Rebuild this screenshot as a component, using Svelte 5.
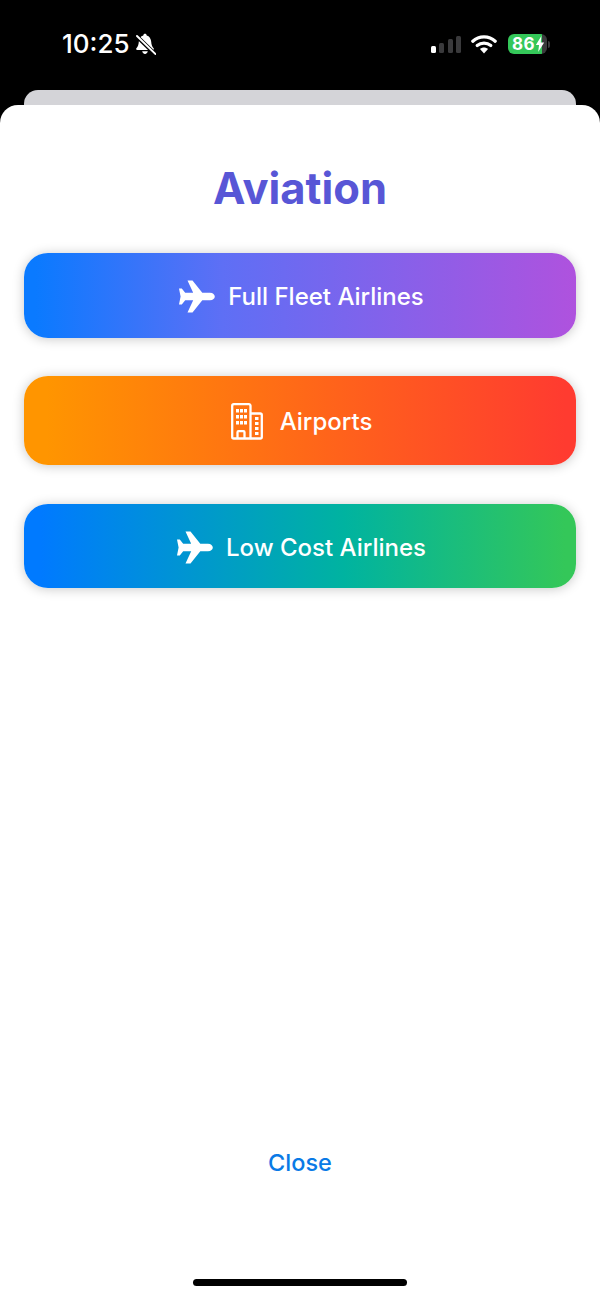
<script lang="ts">
  const buttons = [
    { label: 'Full Fleet Airlines', icon: 'plane', tone: 'fleet' },
    { label: 'Airports', icon: 'building', tone: 'airports' },
    { label: 'Low Cost Airlines', icon: 'plane', tone: 'lowcost' }
  ];
</script>

<div class="screen">
  <header class="status">
    <div class="status__left">
      <span class="status__time">10:25</span>
      <svg class="bell" width="22" height="22" viewBox="0 0 22 22" aria-hidden="true">
        <path d="M11 .8c-1 0-1.600.6-1.700 1.600C6.600 3.100 5 5.600 4.800 8.800c-.2 3-.9 4.900-2.400 6.500-.6.600-.2 1.700.8 1.700h15.600c1 0 1.400-1.100.8-1.700-1.500-1.600-2.200-3.500-2.400-6.500C17 5.600 15.400 3.100 12.700 2.400 12.600 1.400 12 .8 11 .8z" fill="#fff" />
        <path d="M8.200 18.300h5.600c-.2 1.500-1.300 2.600-2.800 2.600s-2.600-1.100-2.800-2.600z" fill="#fff" />
        <path d="M3 3.500l18 17.500" stroke="#000" stroke-width="4" />
        <path d="M3 3l18.500 18" stroke="#fff" stroke-width="1.900" stroke-linecap="round" />
      </svg>
    </div>
    <div class="status__right">
      <div class="signal">
        <i class="on h1"></i><i class="h2"></i><i class="h3"></i><i class="h4"></i>
      </div>
      <svg class="wifi" width="26" height="20" viewBox="0 0 26 20" aria-hidden="true">
        <path d="M1.800 7.200C8 1.500 18 1.500 24.200 7.200" fill="none" stroke="#fff" stroke-width="3.200" stroke-linecap="round" />
        <path d="M6.200 11.500c3.900-3.300 9.700-3.300 13.600 0" fill="none" stroke="#fff" stroke-width="3.200" stroke-linecap="round" />
        <path d="M9 15c2.400-2 5.600-2 8 0l-4 4.500z" fill="#fff" />
      </svg>
      <div class="battery">
        <div class="battery__body">
          <span>86</span>
          <svg width="10" height="16" viewBox="0 0 9 15" aria-hidden="true">
            <path d="M5.800 0L.6 8.400h3L2.800 15l5.600-9H5.200z" fill="#fff" />
          </svg>
        </div>
        <div class="battery__cap"></div>
      </div>
    </div>
  </header>

  <div class="sheet-behind"></div>

  <main class="sheet">
    <h1 class="sheet__title">Aviation</h1>

    <div class="options">
      {#each buttons as b}
        <button class="option option--{b.tone}">
          {#if b.icon === 'plane'}
            <svg width="36" height="33" viewBox="0 0 36 33" aria-hidden="true">
              <path d="M0 8.500h2.800L6.200 12.700h8L8.500 .5h5L23.300 12.700H31c3 0 4.800 1.900 4.800 3.800s-1.800 3.800-4.800 3.800h-7.700L13.500 32.500h-5L14.200 20.300h-8l-3.400 4.200H0l1.600-8z" fill="#fff" />
            </svg>
          {:else}
            <svg width="32" height="37" viewBox="0 0 32 37" fill="none" stroke="#fff" stroke-width="2.300" stroke-linejoin="round" aria-hidden="true">
              <path d="M19.500 35.500H2.800a1.600 1.600 0 0 1-1.600-1.600V2.800a1.600 1.600 0 0 1 1.600-1.600h15a1.600 1.600 0 0 1 1.700 1.600z" />
              <path d="M19.500 10.500h9.700a1.600 1.600 0 0 1 1.600 1.600v21.800a1.600 1.600 0 0 1-1.600 1.600h-9.700" />
              <path d="M6.500 35.500v-6.300a1 1 0 0 1 1-1h5a1 1 0 0 1 1 1v6.300" />
              <g fill="#fff" stroke="none">
                <rect x="5" y="6" width="3" height="3.500" /><rect x="9" y="6" width="3" height="3.500" /><rect x="13" y="6" width="3" height="3.500" />
                <rect x="5" y="12" width="3" height="3.500" /><rect x="9" y="12" width="3" height="3.500" /><rect x="13" y="12" width="3" height="3.500" />
                <rect x="5" y="18" width="3" height="3.500" /><rect x="9" y="18" width="3" height="3.500" /><rect x="13" y="18" width="3" height="3.500" />
                <rect x="24" y="14" width="3.500" height="3" /><rect x="24" y="19" width="3.500" height="3" /><rect x="24" y="24" width="3.500" height="3" /><rect x="24" y="29" width="3.500" height="3" />
              </g>
            </svg>
          {/if}
          <span>{b.label}</span>
        </button>
      {/each}
    </div>

    <button class="close">Close</button>
    <div class="home-bar"></div>
  </main>
</div>

<style>
  :global(body) {
    background: #000;
  }

  .screen {
    width: 600px;
    height: 1299px;
    display: flex;
    flex-direction: column;
    background: #000;
    overflow: hidden;
    font-family: Inter, "Liberation Sans", sans-serif;
  }

  .status {
    height: 90px;
    flex: none;
    display: flex;
    justify-content: space-between;
    padding: 28px 50px 0 62px;
    box-sizing: border-box;
    color: #fff;
  }

  .status__left {
    display: flex;
    align-items: flex-start;
    gap: 4px;
  }

  .status__time {
    font-size: 26px;
    line-height: 32px;
    font-weight: 500;
  }

  .bell {
    margin-top: 5px;
  }

  .status__right {
    display: flex;
    align-items: flex-start;
    padding-top: 6px;
  }

  .signal {
    display: flex;
    align-items: flex-end;
    gap: 3.300px;
    height: 17px;
    margin-top: 2px;
    margin-right: 10px;
  }

  .signal i {
    width: 5px;
    border-radius: 1.500px;
    background: #3a3a3c;
  }

  .signal i.on {
    background: #fff;
  }

  .h1 { height: 7px; }
  .h2 { height: 10px; }
  .h3 { height: 14px; }
  .h4 { height: 17px; }

  .wifi {
    margin-right: 11px;
  }

  .battery {
    display: flex;
    align-items: center;
    height: 20px;
  }

  .battery__body {
    width: 39px;
    height: 20px;
    box-sizing: border-box;
    padding-left: 4px;
    display: flex;
    align-items: center;
    border-radius: 6px;
    background: linear-gradient(to right, #34c759 86%, #3a3a3c 86%);
    font-size: 17px;
    font-weight: 700;
    color: #fff;
    letter-spacing: 0.500px;
  }

  .battery__cap {
    width: 2px;
    height: 7px;
    margin-left: 1px;
    border-radius: 0 2px 2px 0;
    background: #3a3a3c;
  }

  .sheet-behind {
    height: 15px;
    flex: none;
    margin: 0 24px;
    background: #d4d4d8;
    border-radius: 14px 14px 0 0;
  }

  .sheet {
    flex: 1;
    display: flex;
    flex-direction: column;
    align-items: stretch;
    background: #fff;
    border-radius: 18px 18px 0 0;
    padding: 56px 24px 13px;
  }

  .sheet__title {
    margin: 0 0 38px;
    text-align: center;
    font-size: 43.500px;
    line-height: 54px;
    font-weight: 700;
    color: #5856d6;
  }

  .options {
    display: flex;
    flex-direction: column;
    gap: 38px;
  }

  .option {
    height: 85px;
    display: flex;
    align-items: center;
    justify-content: center;
    gap: 13px;
    border: none;
    padding: 2px 0 0 3px;
    border-radius: 24px;
    font-family: inherit;
    font-size: 24px;
    font-weight: 500;
    color: #fff;
    box-shadow: 0 1px 12px rgba(0, 0, 0, 0.22);
  }

  .option--fleet {
    background: linear-gradient(to right, #0a7aff 2%, #5e6ff5 36%, #af52de);
  }

  .option--airports {
    height: 89px;
    gap: 17px;
    background: linear-gradient(to right, #ff9500 4%, #ff3b30 98%);
  }

  .option--lowcost {
    height: 84px;
    margin-top: 1px;
    background: linear-gradient(to right, #007aff 3%, #00b3a0 58%, #34c759 98%);
  }

  .close {
    margin-top: auto;
    align-self: center;
    border: none;
    background: none;
    padding: 0;
    font-family: inherit;
    font-size: 23.500px;
    line-height: 30px;
    font-weight: 500;
    color: #0a7ae6;
  }

  .home-bar {
    flex: none;
    align-self: center;
    width: 214px;
    height: 7px;
    margin-top: 101px;
    border-radius: 4px;
    background: #000;
  }
</style>
